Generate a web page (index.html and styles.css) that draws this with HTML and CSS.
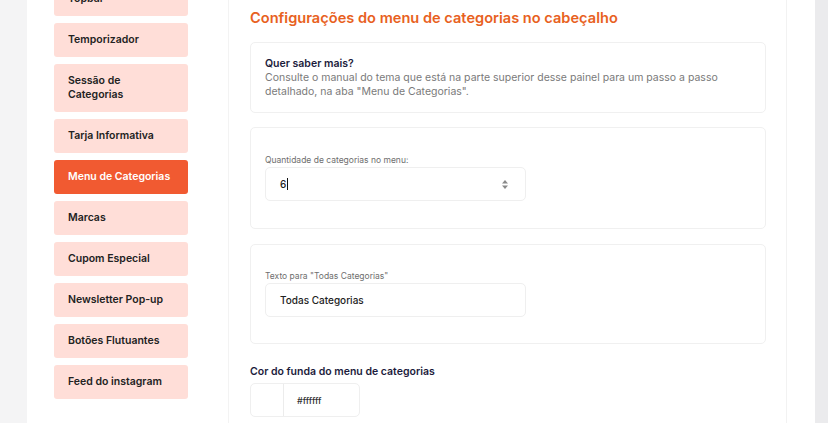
FILE: index.html
```html
<!DOCTYPE html>
<html lang="pt-BR">
<head>
<meta charset="utf-8">
<title>Menu de Categorias</title>
<link rel="stylesheet" href="styles.css">
</head>
<body>
<div class="gutter-left"></div>
<div class="panel">
  <aside class="sidebar">
    <div class="nav-list">
      <a class="nav-btn nav-cut">Topbar</a>
      <a class="nav-btn">Temporizador</a>
      <a class="nav-btn nav-tall">Sessão de<br>Categorias</a>
      <a class="nav-btn">Tarja Informativa</a>
      <a class="nav-btn active">Menu de Categorias</a>
      <a class="nav-btn">Marcas</a>
      <a class="nav-btn">Cupom Especial</a>
      <a class="nav-btn">Newsletter Pop-up</a>
      <a class="nav-btn">Botões Flutuantes</a>
      <a class="nav-btn">Feed do instagram</a>
    </div>
  </aside>
  <main class="content">
    <h1 class="title">Configurações do menu de categorias no cabeçalho</h1>
    <section class="card info">
      <p class="info-title">Quer saber mais?</p>
      <p class="info-text">Consulte o manual do tema que está na parte superior desse painel para um passo a passo detalhado, na aba "Menu de Categorias".</p>
    </section>
    <section class="card field-card">
      <label class="field-label">Quantidade de categorias no menu:</label>
      <div class="input">
        <span class="value">6</span><span class="caret"></span>
        <svg class="spin" width="8" height="12" viewBox="0 0 8 12"><path d="M4 2 L7 5.5 L1 5.5 Z" fill="#8a8a8a"/><path d="M1 7.5 L7 7.5 L4 11 Z" fill="#8a8a8a"/></svg>
      </div>
    </section>
    <section class="card field-card">
      <label class="field-label">Texto para "Todas Categorias"</label>
      <div class="input">
        <span class="value">Todas Categorias</span>
      </div>
    </section>
    <h2 class="sub-title">Cor do funda do menu de categorias</h2>
    <div class="color-input">
      <div class="swatch"></div>
      <div class="hex">#ffffff</div>
    </div>
  </main>
  <div class="panel-right"></div>
</div>
<div class="gutter-right"></div>
</body>
</html>
```
FILE: styles.css
```css
* { box-sizing: border-box; }
html, body { margin: 0; padding: 0; height: 100%; overflow: hidden; }
body {
  display: flex;
  font-family: "Inter", "Open Sans", sans-serif;
  background: #f4f4f5;
  color: #222;
}
.gutter-left { width: 27px; flex: none; background: #f4f4f5; }
.gutter-right { width: 13px; flex: none; background: #ebebed; }
.panel {
  flex: 1;
  display: flex;
  background: #fff;
  height: 423px;
}
.sidebar {
  width: 202px;
  flex: none;
  border-right: 1px solid #f3f3f3;
  padding-left: 27px;
}
.nav-list {
  display: flex;
  flex-direction: column;
  gap: 7px;
  margin-top: -18px;
}
.nav-btn {
  display: flex;
  align-items: center;
  width: 134px;
  height: 34px;
  padding-left: 14px;
  background: #ffded8;
  border-radius: 3px;
  font-size: 10.5px;
  font-weight: 600;
  color: #222;
  line-height: 14px;
}
.nav-tall { height: 48px; }
.nav-btn.active { background: #f15a31; color: #fff; }
.content {
  width: 558px;
  flex: none;
  border-right: 1px solid #f2f2f2;
  padding: 0 20px 0 21px;
}
.panel-right { flex: 1; }
.title {
  margin: 8px 0 0;
  height: 20px;
  font-size: 14.6px;
  font-weight: 600;
  color: #e8611e;
  line-height: 20px;
}
.card {
  border: 1px solid #f0f0f0;
  border-radius: 5px;
  background: #fff;
}
.info {
  margin-top: 14px;
  height: 71px;
  padding: 14px 14px 0;
}
.info-title {
  margin: 0;
  font-size: 10.5px;
  font-weight: 600;
  color: #1c1c3c;
  line-height: 14px;
}
.info-text {
  margin: 0;
  font-size: 10.5px;
  color: #7a7a7a;
  line-height: 14px;
}
.field-card {
  margin-top: 14px;
  height: 102px;
  padding: 26px 14px 0;
}
.field-card + .field-card { margin-top: 15px; height: 100px; padding-top: 25px; }
.field-label {
  display: block;
  font-size: 8.5px;
  color: #6e6e6e;
  line-height: 13px;
}
.input {
  display: flex;
  align-items: center;
  width: 261px;
  height: 34px;
  border: 1px solid #efefef;
  border-radius: 5px;
  padding: 0 14px;
  font-size: 10px;
  font-weight: 500;
  color: #222;
}
.caret {
  display: inline-block;
  width: 1px;
  height: 12px;
  background: #111;
  margin-left: 1px;
}
.spin { margin-left: auto; margin-right: 2px; }
.sub-title {
  margin: 20px 0 0;
  font-size: 10.5px;
  font-weight: 600;
  color: #1c1c3c;
  line-height: 16px;
}
.color-input {
  display: flex;
  width: 110px;
  height: 34px;
  margin-top: 3px;
  border: 1px solid #efefef;
  border-radius: 5px;
}
.swatch { width: 33px; border-right: 1px solid #ececec; }
.hex {
  display: flex;
  align-items: center;
  padding-left: 13px;
  font-size: 9px;
  font-weight: 500;
  color: #333;
}
```
